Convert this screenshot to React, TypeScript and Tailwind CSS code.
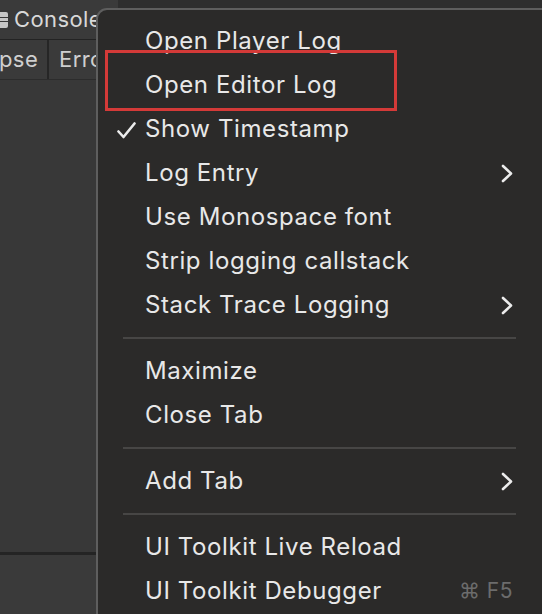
import React from 'react';

type Item =
  | { kind: 'item'; label: string; checked?: boolean; submenu?: boolean; shortcut?: string }
  | { kind: 'sep' };

const items: Item[] = [
  { kind: 'item', label: 'Open Player Log' },
  { kind: 'item', label: 'Open Editor Log' },
  { kind: 'item', label: 'Show Timestamp', checked: true },
  { kind: 'item', label: 'Log Entry', submenu: true },
  { kind: 'item', label: 'Use Monospace font' },
  { kind: 'item', label: 'Strip logging callstack' },
  { kind: 'item', label: 'Stack Trace Logging', submenu: true },
  { kind: 'sep' },
  { kind: 'item', label: 'Maximize' },
  { kind: 'item', label: 'Close Tab' },
  { kind: 'sep' },
  { kind: 'item', label: 'Add Tab', submenu: true },
  { kind: 'sep' },
  { kind: 'item', label: 'UI Toolkit Live Reload' },
  { kind: 'item', label: 'UI Toolkit Debugger', shortcut: '⌘ F5' },
];

function Check() {
  return (
    <svg width="19" height="17" viewBox="0 0 19 17" fill="none">
      <path d="M1.5 9.5L6.5 15L17.5 1.5" stroke="#ececec" strokeWidth={2.6} strokeLinecap="round" strokeLinejoin="round" />
    </svg>
  );
}

function Chevron() {
  return (
    <svg width="12" height="19" viewBox="0 0 12 19" fill="none">
      <path d="M2 2L10 9.5L2 17" stroke="#ececec" strokeWidth={2.6} strokeLinecap="round" strokeLinejoin="round" />
    </svg>
  );
}

export default function App() {
  return (
    <div
      className="relative w-[542px] h-[614px] overflow-hidden bg-[#383838] text-[#e4e4e4]"
      style={{ fontFamily: 'Inter, "Noto Sans", sans-serif' }}
    >
      {/* editor window behind the menu */}
      <div className="flex flex-col h-full">
        <div className="h-[39px] bg-[#2e2e2e] flex items-end">
          <div className="h-[39px] bg-[#3a3a3a] flex items-center gap-[6px] pr-4">
            <div className="w-[8px] h-[16px] bg-[#c8c8c8] rounded-r-[2px] flex flex-col justify-center gap-[3px]">
              <div className="h-[1px] bg-[#3a3a3a]" />
              <div className="h-[1px] bg-[#3a3a3a]" />
            </div>
            <span className="text-[22px] tracking-[0.4px] text-[#d8d8d8]">Console</span>
          </div>
        </div>
        <div className="h-[40px] bg-[#3a3a3a] border-t border-[#232323] flex items-center">
          <div className="h-full flex items-center border-r-2 border-[#262626] pr-[9px]">
            <span className="text-[22px] tracking-[0.4px] text-[#cfcfcf] -ml-[1px]">pse</span>
          </div>
          <span className="text-[22px] tracking-[0.4px] text-[#cfcfcf] ml-[10px]">Errors</span>
        </div>
        <div className="flex-1 bg-[#383838] border-t border-[#2c2c2c]" />
        <div className="h-[62px] bg-[#3a3a3a] border-t-[3px] border-[#242424]" />
      </div>

      {/* dropdown menu */}
      <div className="absolute left-[96px] top-[8px] w-[470px] h-[640px] rounded-[11px] border-2 border-[#5e5e5e] bg-[#2b2a29] pt-[9px]">
        {items.map((it, i) =>
          it.kind === 'sep' ? (
            <div key={i} className="h-[22px] flex items-center pl-[25px] pr-[48px]">
              <div className="h-[2px] w-full bg-[#474645]" />
            </div>
          ) : (
            <div key={i} className="h-[44px] flex items-center pr-[51px]">
              <div className="w-[47px] shrink-0 flex items-center pl-[19px] pt-[2px]">{it.checked && <Check />}</div>
              <span className="flex-1 text-[24px] tracking-[0.6px] leading-none text-[#e8e8e8]">{it.label}</span>
              {it.submenu && <Chevron />}
              {it.shortcut && <span className="text-[21px] text-[#6c6c6c] tracking-[0.5px]">{it.shortcut}</span>}
            </div>
          )
        )}
      </div>

      {/* highlight annotation */}
      <div className="absolute left-[105px] top-[50px] w-[292px] h-[61px] border-[3px] border-[#d43a38]" />
    </div>
  );
}
